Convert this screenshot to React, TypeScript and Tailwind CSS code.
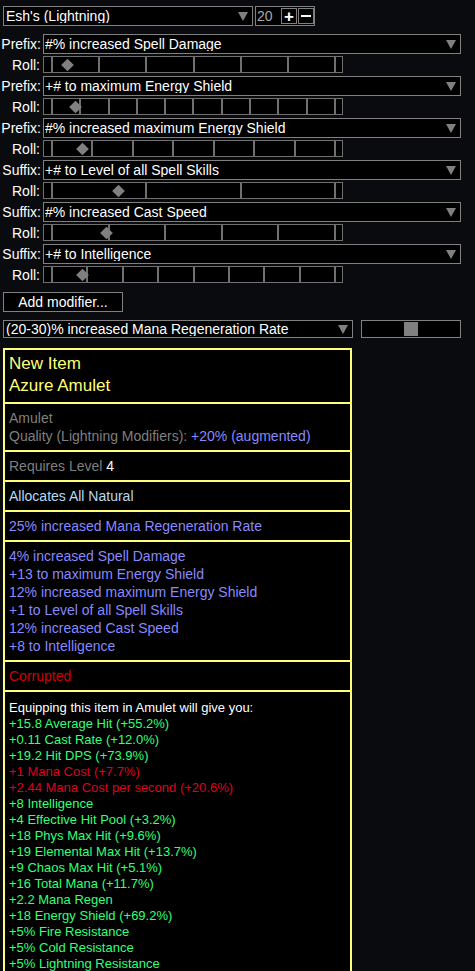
import clsx from "clsx";

const mods = [
  { kind: "Prefix", text: "#% increased Spell Damage", segs: 6, thumb: 67 },
  { kind: "Prefix", text: "+# to maximum Energy Shield", segs: 10, thumb: 75 },
  { kind: "Prefix", text: "#% increased maximum Energy Shield", segs: 7, thumb: 82 },
  { kind: "Suffix", text: "+# to Level of all Spell Skills", segs: 3, thumb: 118 },
  { kind: "Suffix", text: "#% increased Cast Speed", segs: 5, thumb: 106 },
  { kind: "Suffix", text: "+# to Intelligence", segs: 8, thumb: 82 },
];

const magic = [
  "4% increased Spell Damage",
  "+13 to maximum Energy Shield",
  "12% increased maximum Energy Shield",
  "+1 to Level of all Spell Skills",
  "12% increased Cast Speed",
  "+8 to Intelligence",
];

const compare: [string, boolean][] = [
  ["+15.8 Average Hit (+55.2%)", true],
  ["+0.11 Cast Rate (+12.0%)", true],
  ["+19.2 Hit DPS (+73.9%)", true],
  ["+1 Mana Cost (+7.7%)", false],
  ["+2.44 Mana Cost per second (+20.6%)", false],
  ["+8 Intelligence", true],
  ["+4 Effective Hit Pool (+3.2%)", true],
  ["+18 Phys Max Hit (+9.6%)", true],
  ["+19 Elemental Max Hit (+13.7%)", true],
  ["+9 Chaos Max Hit (+5.1%)", true],
  ["+16 Total Mana (+11.7%)", true],
  ["+2.2 Mana Regen", true],
  ["+18 Energy Shield (+69.2%)", true],
  ["+5% Fire Resistance", true],
  ["+5% Cold Resistance", true],
  ["+5% Lightning Resistance", true],
  ["+3 Maximum Energy Shield Regen", true],
];

function Arrow() {
  return (
    <svg width="10" height="9" viewBox="0 0 10 9" className="shrink-0">
      <polygon points="0,0 10,0 5,9" fill="#808080" />
    </svg>
  );
}

function Dropdown({ text, className }: { text: string; className?: string }) {
  return (
    <div className={clsx("flex items-center justify-between border border-[#808080] bg-black pl-[1px] pr-[4px]", className)}>
      <span className="truncate leading-none">{text}</span>
      <Arrow />
    </div>
  );
}

function Slider({ segs, thumb }: { segs: number; thumb: number }) {
  return (
    <div className="relative flex h-[17px] w-[300px] border border-[#707070] bg-black">
      <div className="w-[7px]" />
      {Array.from({ length: segs }).map((_, i) => (
        <div key={i} className="flex-1 border-l-2 border-[#707070]" />
      ))}
      <div className="w-[2px] bg-[#707070]" />
      <div className="w-[6px]" />
      <div className="absolute top-1/2 h-[9px] w-[9px] -translate-y-1/2 rotate-45 bg-[#808080]" style={{ left: thumb - 48.5 }} />
    </div>
  );
}

export default function App() {
  return (
    <div className="h-[971px] overflow-hidden bg-[#0a0b0e] font-['Liberation_Sans',Arial,sans-serif] text-[14px] text-white">
      <div className="flex items-center gap-[2px] pl-[3px] pt-[6px]">
        <Dropdown text="Esh's (Lightning)" className="h-[20px] w-[250px] pl-[2px]" />
        <div className="flex h-[20px] w-[60px] items-center border border-[#808080] bg-black pl-[1px]">
          <span className="w-[24px] text-[#a8a8a8] leading-none">20</span>
          <div className="flex h-[16px] w-[16px] items-center justify-center border border-[#808080] text-[17px] font-bold leading-none">+</div>
          <div className="ml-[1px] flex h-[16px] w-[16px] items-center justify-center border border-[#808080]">
            <div className="h-[2px] w-[10px] bg-white" />
          </div>
        </div>
      </div>

      <div className="mt-[8px] flex flex-col gap-[3px]">
        {mods.map((m) => (
          <div key={m.text} className="flex flex-col gap-[2px]">
            <div className="flex items-center">
              <span className="w-[41px] text-right leading-none">{m.kind}:</span>
              <Dropdown text={m.text} className="ml-[2px] h-[20px] w-[418px]" />
            </div>
            <div className="flex items-center">
              <span className="w-[40px] text-right leading-none">Roll:</span>
              <div className="ml-[3px]">
                <Slider segs={m.segs} thumb={m.thumb} />
              </div>
            </div>
          </div>
        ))}
      </div>

      <div className="ml-[3px] mt-[9px] flex h-[20px] w-[120px] items-center justify-center border border-[#808080] bg-black leading-none">
        Add modifier...
      </div>

      <div className="ml-[3px] mt-[8px] flex items-center gap-[8px]">
        <Dropdown text="(20-30)% increased Mana Regeneration Rate" className="h-[18px] w-[350px] pl-[2px]" />
        <div className="flex h-[18px] w-[100px] items-center border border-[#808080] bg-black pl-[42px]">
          <div className="h-[14px] w-[14px] bg-[#808080]" />
        </div>
      </div>

      <div className="ml-[3px] mt-[10px] w-[349px] border-2 border-[#ffff77] bg-black">
        <div className="px-[4px] pb-[5px] pt-[3px] text-[17px] leading-[22px] text-[#ffff77]">
          <div>New Item</div>
          <div>Azure Amulet</div>
        </div>
        <div className="border-t-2 border-[#ffff77] px-[4px] py-[5px] leading-[18px] text-[#7f7f7f]">
          <div>Amulet</div>
          <div>
            Quality (Lightning Modifiers): <span className="text-[#8888ff]">+20% (augmented)</span>
          </div>
        </div>
        <div className="border-t-2 border-[#ffff77] px-[4px] py-[5px] leading-[18px] text-[#7f7f7f]">
          Requires Level <span className="text-white">4</span>
        </div>
        <div className="border-t-2 border-[#ffff77] px-[4px] py-[5px] leading-[18px] text-[#b8daf1]">Allocates All Natural</div>
        <div className="border-t-2 border-[#ffff77] px-[4px] py-[5px] leading-[18px] text-[#8888ff]">25% increased Mana Regeneration Rate</div>
        <div className="border-t-2 border-[#ffff77] px-[4px] py-[5px] leading-[18px] text-[#8888ff]">
          {magic.map((t) => (
            <div key={t}>{t}</div>
          ))}
        </div>
        <div className="border-t-2 border-[#ffff77] px-[4px] py-[5px] leading-[18px] text-[#d20000]">Corrupted</div>
        <div className="border-t-2 border-[#ffff77] px-[4px] pb-[5px] pt-[8px] text-[13px] leading-[16px]">
          <div className="text-white">Equipping this item in Amulet will give you:</div>
          {compare.map(([t, good]) => (
            <div key={t} className={good ? "text-[#33ff77]" : "text-[#dd0022]"}>
              {t}
            </div>
          ))}
        </div>
      </div>
    </div>
  );
}
